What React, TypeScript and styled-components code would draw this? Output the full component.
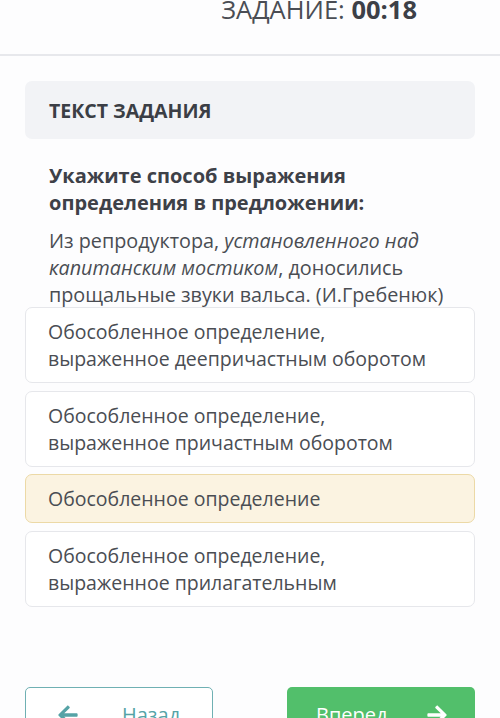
import React from "react";
import styled, { createGlobalStyle } from "styled-components";
import { FaArrowLeft, FaArrowRight } from "react-icons/fa";

const Global = createGlobalStyle`
  html, body { margin: 0; padding: 0; background: #fdfdfe; }
  body { font-family: "Open Sans", "Noto Sans", sans-serif; color: #45484e; overflow: hidden; }
  * { box-sizing: border-box; }
`;

const Page = styled.div`
  width: 500px;
  height: 718px;
  overflow: hidden;
  display: flex;
  flex-direction: column;
  & > * { flex-shrink: 0; }
`;

const TopBar = styled.header`
  height: 56px;
  display: flex;
  justify-content: flex-end;
  align-items: flex-start;
  padding-right: 83px;
  border-bottom: 2px solid #e7e8ec;
  overflow: hidden;
`;

const Timer = styled.div`
  margin-top: -9px;
  font-size: 25.5px;
  line-height: 36px;
  color: #4a4d54;
  white-space: nowrap;
  b { font-weight: 700; color: #3d4047; }
`;

const Body = styled.main`
  padding: 25px 25px 0;
  display: flex;
  flex-direction: column;
`;

const SectionHead = styled.div`
  height: 58px;
  background: #f2f3f6;
  border-radius: 7px;
  display: flex;
  align-items: center;
  padding-left: 24px;
  font-size: 19.5px;
  font-weight: 700;
  color: #3b3e45;
`;

const Question = styled.div`
  margin-top: 23px;
  padding-left: 24px;
  font-size: 20px;
  font-weight: 700;
  line-height: 27px;
  color: #3e4148;
`;

const Passage = styled.p`
  margin: 11px 0 0;
  padding-left: 24px;
  font-size: 19.8px;
  line-height: 27px;
  color: #4a4d53;
  white-space: nowrap;
  i { font-style: italic; }
`;

const Options = styled.div`
  display: flex;
  flex-direction: column;
  gap: 7.5px;
  margin-top: -1px;
`;

const Option = styled.div<{ $selected?: boolean }>`
  border: 1px solid ${(p) => (p.$selected ? "#ecd9a6" : "#e6e7eb")};
  background: ${(p) => (p.$selected ? "#fbf3e1" : "#ffffff")};
  border-radius: 7px;
  padding: 10px 22px;
  font-size: 19.5px;
  line-height: 27px;
  color: #4a4d53;
  white-space: nowrap;
`;

const Nav = styled.div`
  margin-top: 80px;
  display: flex;
  justify-content: space-between;
`;

const NavButton = styled.button<{ $primary?: boolean }>`
  width: 188px;
  height: 56px;
  border-radius: 5px;
  font-family: inherit;
  font-size: 20px;
  display: flex;
  align-items: center;
  padding: ${(p) => (p.$primary ? "0 27px 0 29px" : "0 20px 0 31px")};
  border: ${(p) => (p.$primary ? "none" : "1.5px solid #6fb0b3")};
  background: ${(p) => (p.$primary ? "#52bf6b" : "#ffffff")};
  color: ${(p) => (p.$primary ? "#ffffff" : "#55a3a6")};
  svg { width: 22px; height: 22px; flex-shrink: 0; }
`;

const Label = styled.span<{ $primary?: boolean }>`
  margin-left: ${(p) => (p.$primary ? "0" : "43px")};
  margin-right: ${(p) => (p.$primary ? "auto" : "0")};
`;

export default function App() {
  return (
    <Page>
      <Global />
      <TopBar>
        <Timer>
          ЗАДАНИЕ: <b>00:18</b>
        </Timer>
      </TopBar>
      <Body>
        <SectionHead>ТЕКСТ ЗАДАНИЯ</SectionHead>
        <Question>
          Укажите способ выражения
          <br />
          определения в предложении:
        </Question>
        <Passage>
          Из репродуктора, <i>установленного над</i>
          <br />
          <i>капитанским мостиком</i>, доносились
          <br />
          прощальные звуки вальса. (И.Гребенюк)
        </Passage>
        <Options>
          <Option>
            Обособленное определение,
            <br />
            выраженное деепричастным оборотом
          </Option>
          <Option>
            Обособленное определение,
            <br />
            выраженное причастным оборотом
          </Option>
          <Option $selected>Обособленное определение</Option>
          <Option>
            Обособленное определение,
            <br />
            выраженное прилагательным
          </Option>
        </Options>
        <Nav>
          <NavButton>
            <FaArrowLeft />
            <Label>Назад</Label>
          </NavButton>
          <NavButton $primary>
            <Label $primary>Вперед</Label>
            <FaArrowRight />
          </NavButton>
        </Nav>
      </Body>
    </Page>
  );
}
